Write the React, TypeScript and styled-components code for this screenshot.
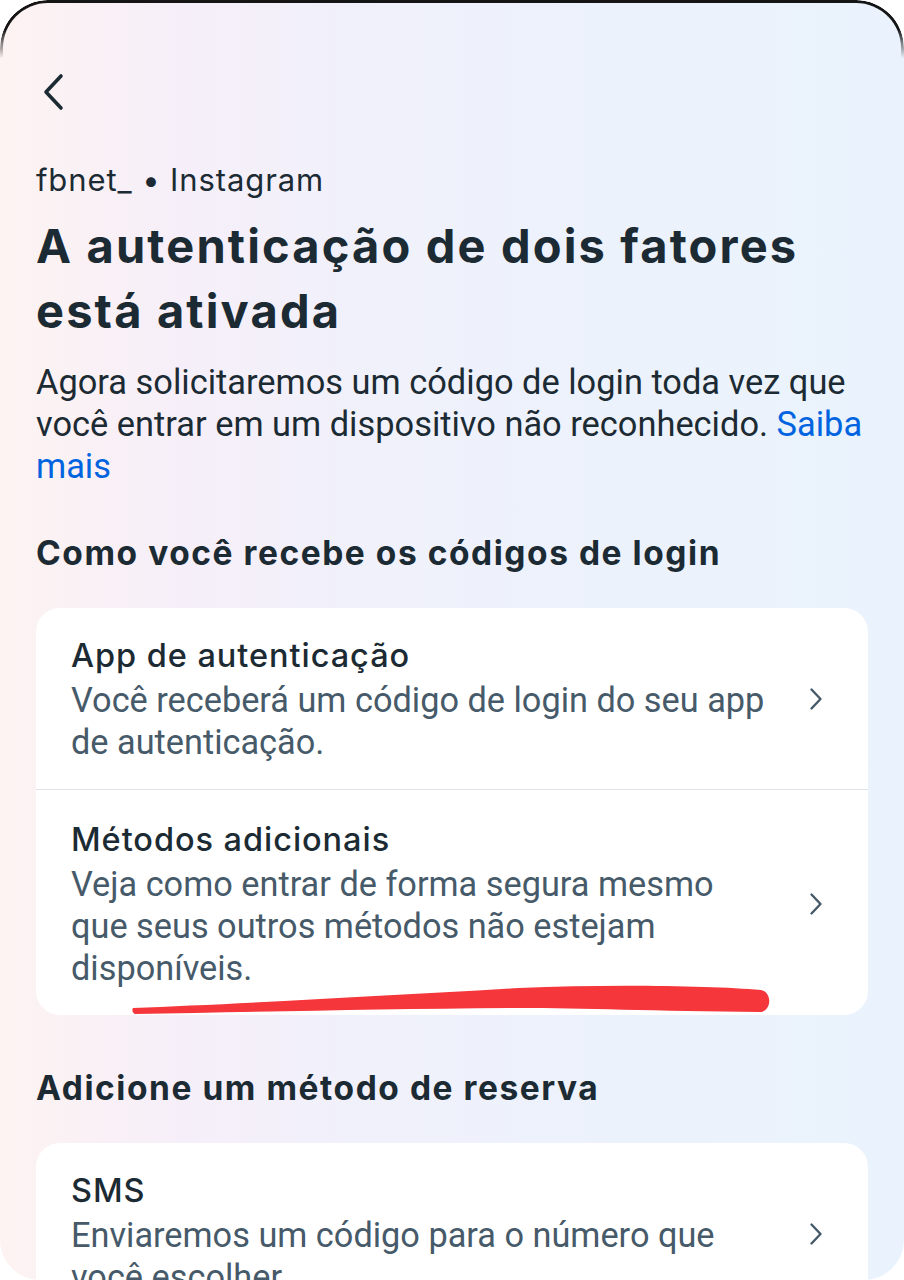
import React from "react";
import styled, { createGlobalStyle } from "styled-components";

const Global = createGlobalStyle`
  html, body { margin: 0; padding: 0; background: #ffffff; }
  * { box-sizing: border-box; }
`;

const Screen = styled.div`
  position: relative;
  width: 904px;
  height: 1280px;
  overflow: hidden;
  border-radius: 48px 48px 40px 40px;
  background: linear-gradient(90deg, #fdf3f2 0%, #f6eff9 20%, #f0f1fb 42%, #ecf2fc 68%, #eaf3fd 100%);
  padding: 0 36px;
  font-family: Roboto, "Liberation Sans", sans-serif;
  color: #1c2b33;
  &::before {
    content: "";
    position: absolute;
    top: 0; left: 0; right: 0;
    height: 70px;
    border: 3px solid #151515;
    border-bottom: none;
    border-radius: 48px 48px 0 0;
    -webkit-mask-image: linear-gradient(to bottom, #000 40%, transparent 80%);
    mask-image: linear-gradient(to bottom, #000 40%, transparent 80%);
    pointer-events: none;
  }
`;

const BackButton = styled.div`
  margin-top: 72px;
  height: 40px;
  width: 40px;
  display: flex;
  align-items: center;
  margin-left: 3px;
`;

const Account = styled.div`
  margin-top: 48px;
  font-family: Inter, "Liberation Sans", sans-serif;
  font-size: 31px;
  line-height: 40px;
  letter-spacing: 0.9px;
  color: #1c2b33;
`;

const Title = styled.h1`
  margin: 13px 0 0;
  font-family: Inter, "Liberation Sans", sans-serif;
  font-weight: 700;
  font-size: 47px;
  line-height: 65px;
  letter-spacing: 2.15px;
  color: #1c2b33;
`;

const Paragraph = styled.p`
  margin: 18px -24px 0 0;
  font-size: 34.4px;
  line-height: 42px;
  color: #1c2b33;
`;

const Link = styled.span`
  color: #0064e0;
`;

const SectionHeading = styled.h2<{ $top: number }>`
  margin: ${(p) => p.$top}px 0 0;
  font-family: Inter, "Liberation Sans", sans-serif;
  font-weight: 700;
  font-size: 33.5px;
  line-height: 42px;
  letter-spacing: 1.55px;
  color: #1c2b33;
`;

const Card = styled.div`
  position: relative;
  margin-top: 34px;
  background: #ffffff;
  border-radius: 24px;
`;

const Row = styled.div<{ $pt: number }>`
  display: flex;
  align-items: center;
  padding: ${(p) => p.$pt}px 44px 26px 35px;
  & + & { border-top: 1px solid #dfe3e7; }
`;

const RowText = styled.div`
  flex: 1;
  min-width: 0;
  padding-right: 6px;
`;

const RowTitle = styled.div`
  font-family: Inter, "Liberation Sans", sans-serif;
  font-size: 32.5px;
  line-height: 42px;
  letter-spacing: 0.95px;
  color: #1c2b33;
  font-weight: 500;
`;

const RowDesc = styled.div`
  margin-top: 2px;
  font-size: 34.3px;
  line-height: 42px;
  color: #465a69;
`;

const Scribble = styled.svg`
  position: absolute;
  left: 97px;
  top: 369px;
  overflow: visible;
`;

const Chevron = () => (
  <svg width="16" height="26" viewBox="0 0 16 26" fill="none">
    <path d="M3.5 3.5 L12.5 13 L3.5 22.5" stroke="#465a69" strokeWidth="2.4" strokeLinecap="round" strokeLinejoin="round" />
  </svg>
);

type Item = { title: string; lines: string[]; pt: number };

const MethodRow = ({ title, lines, pt }: Item) => (
  <Row $pt={pt}>
    <RowText>
      <RowTitle>{title}</RowTitle>
      <RowDesc>
        {lines.map((l, i) => (
          <React.Fragment key={i}>
            {i > 0 && <br />}
            {l}
          </React.Fragment>
        ))}
      </RowDesc>
    </RowText>
    <Chevron />
  </Row>
);

export default function App() {
  return (
    <>
      <Global />
      <Screen>
        <BackButton>
          <svg width="30" height="40" viewBox="0 0 30 40" fill="none">
            <path d="M22 4 L7 20 L22 36" stroke="#1c2b33" strokeWidth="3.6" strokeLinecap="round" strokeLinejoin="round" />
          </svg>
        </BackButton>
        <Account>fbnet_ • Instagram</Account>
        <Title>
          A autenticação de dois fatores
          <br />
          está ativada
        </Title>
        <Paragraph>
          Agora solicitaremos um código de login toda vez que
          <br />
          você entrar em um dispositivo não reconhecido. <Link>Saiba<br />mais</Link>
        </Paragraph>
        <SectionHeading $top={45}>Como você recebe os códigos de login</SectionHeading>
        <Card>
          <MethodRow
            pt={27}
            title="App de autenticação"
            lines={["Você receberá um código de login do seu app", "de autenticação."]}
          />
          <MethodRow
            pt={29}
            title="Métodos adicionais"
            lines={["Veja como entrar de forma segura mesmo", "que seus outros métodos não estejam", "disponíveis."]}
          />
          <Scribble width="640" height="40" viewBox="0 0 640 40">
            <path
              d="M0 31 C100 27 250 19 386 11 C480 7 580 9 628 13 C639 15 639 33 628 35 C520 34 450 31 386 31 C250 32 120 35 2 37 C-1 36 -1 32 0 31 Z"
              fill="#f5363a"
            />
          </Scribble>
        </Card>
        <SectionHeading $top={52}>Adicione um método de reserva</SectionHeading>
        <Card>
          <MethodRow
            pt={27}
            title="SMS"
            lines={["Enviaremos um código para o número que", "você escolher."]}
          />
        </Card>
      </Screen>
    </>
  );
}
